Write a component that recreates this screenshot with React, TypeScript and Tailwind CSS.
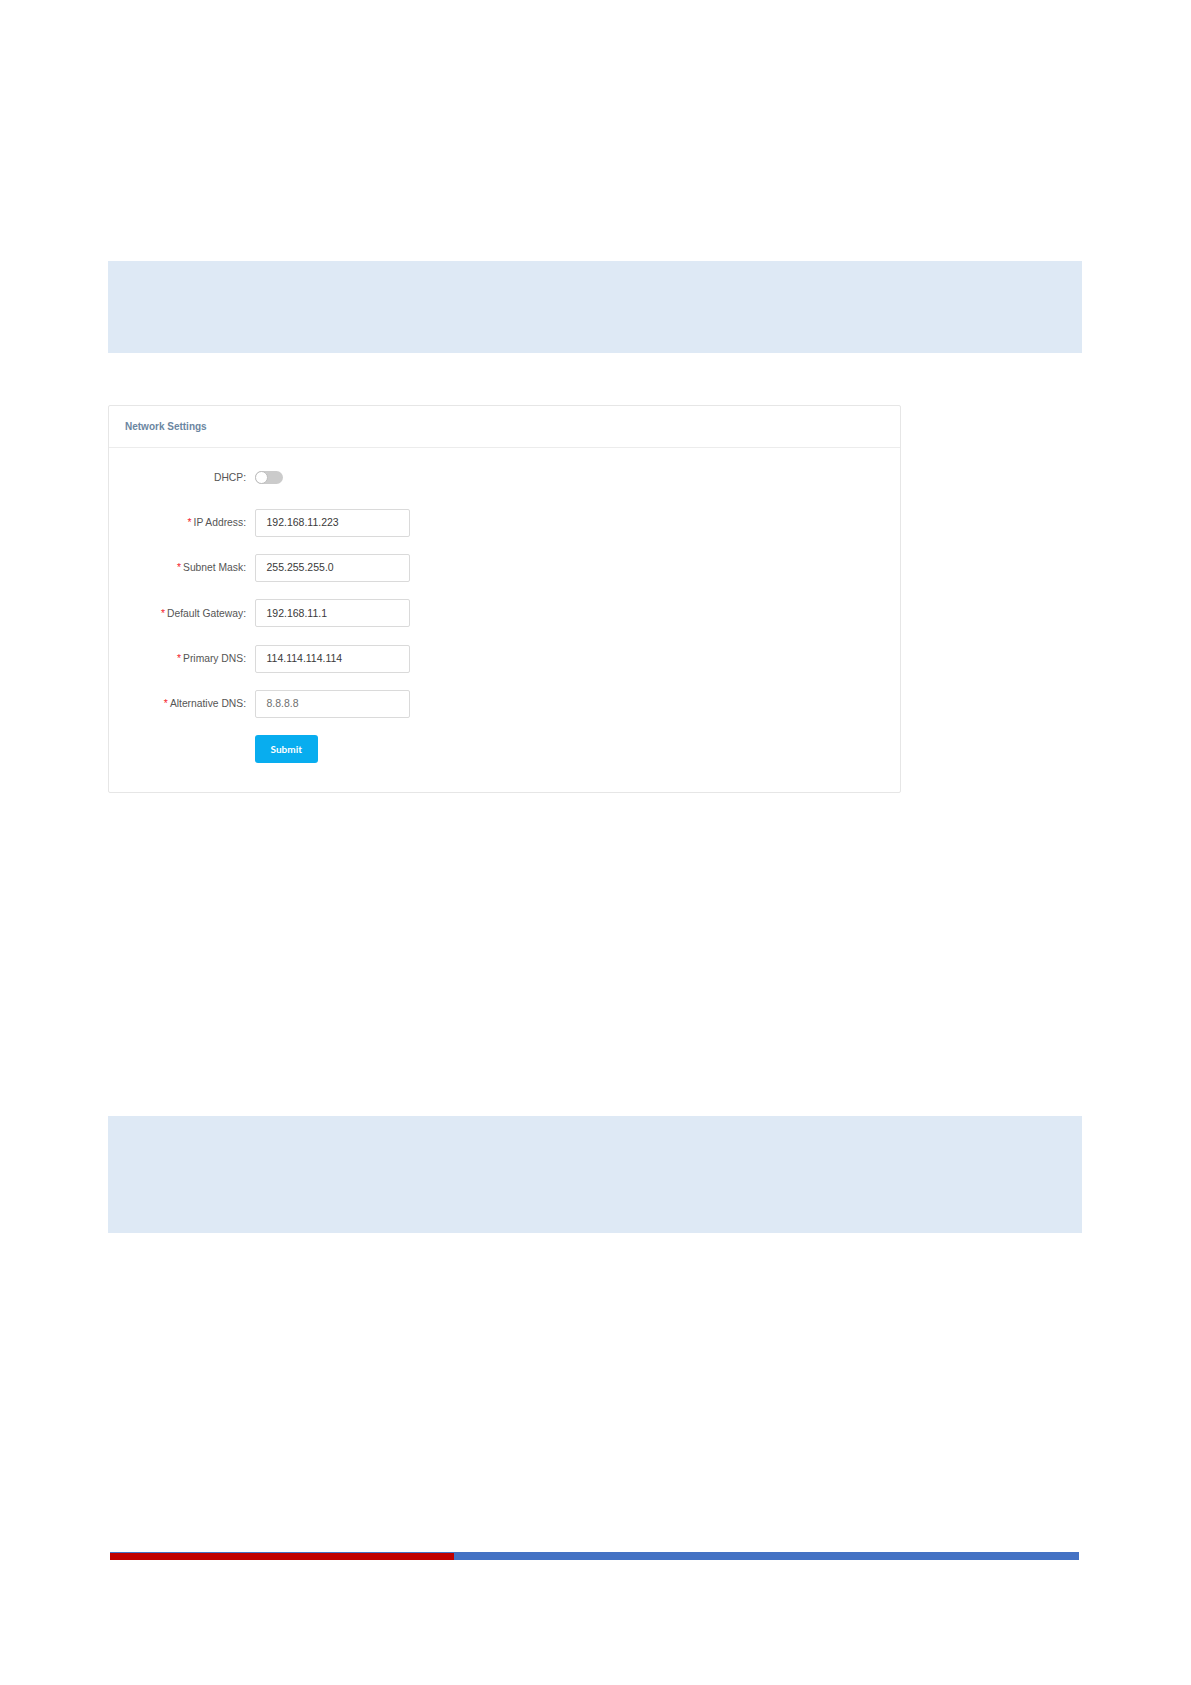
import React from "react";

const fields = [
  { label: "IP Address", value: "192.168.11.223" },
  { label: "Subnet Mask", value: "255.255.255.0" },
  { label: "Default Gateway", value: "192.168.11.1" },
  { label: "Primary DNS", value: "114.114.114.114" },
  { label: "Alternative DNS", value: "8.8.8.8", muted: true },
];

function Toggle() {
  return (
    <div className="relative h-[13px] w-[28px] rounded-full bg-[#cbcbcb]">
      <div className="absolute left-0 top-0 h-[13px] w-[13px] rounded-full border border-[#bdbdbd] bg-white" />
    </div>
  );
}

function Row({ label, children }: { label: React.ReactNode; children: React.ReactNode }) {
  return (
    <div className="flex h-[28px] items-center">
      <div className="w-[146px] pr-[9px] text-right text-[10.3px] text-[#555555]">{label}</div>
      {children}
    </div>
  );
}

export default function App() {
  return (
    <div className="min-h-[1685px] bg-white pl-[108px] pt-[261px] font-['Liberation_Sans',Arial,sans-serif]">
      {/* top note box */}
      <div className="h-[92px] w-[974px] bg-[#dee9f5]" />

      {/* Network settings card */}
      <div className="mt-[51.5px] h-[388.5px] w-[792.5px] rounded-[2px] border border-[#e6e6e6] bg-white">
        <div className="flex h-[42.5px] items-center border-b border-[#ececec] pl-[16px] text-[10px] font-bold text-[#6b86a1]">
          Network Settings
        </div>
        <div className="flex flex-col gap-[17.3px] pt-[15.5px]">
          <Row label="DHCP:">
            <Toggle />
          </Row>
          {fields.map((f) => (
            <Row
              key={f.label}
              label={
                <>
                  <span className="mr-[2px] text-[#f5222d]">*</span>
                  {f.label}:
                </>
              }
            >
              <div
                className={
                  "flex h-[28px] w-[154.5px] items-center rounded-[2px] border border-[#dadada] pl-[10.5px] text-[10.5px] " +
                  (f.muted ? "text-[#707070]" : "text-[#3a3a3a]")
                }
              >
                {f.value}
              </div>
            </Row>
          ))}
          <Row label="">
            <button className="flex h-[28px] w-[62.5px] items-center justify-center rounded-[3px] bg-[#08adef] font-['Lato',sans-serif] text-[10px] font-bold text-white">
              Submit
            </button>
          </Row>
        </div>
      </div>

      {/* second note box */}
      <div className="mt-[323px] h-[116.7px] w-[974px] bg-[#dee9f5]" />

      {/* footer bar */}
      <div className="ml-[1.5px] mt-[319.3px] flex h-[8px] w-[969.5px] bg-[#4472c4]">
        <div className="mt-[1px] h-[7px] w-[344.5px] bg-[#c00000]" />
      </div>
    </div>
  );
}
